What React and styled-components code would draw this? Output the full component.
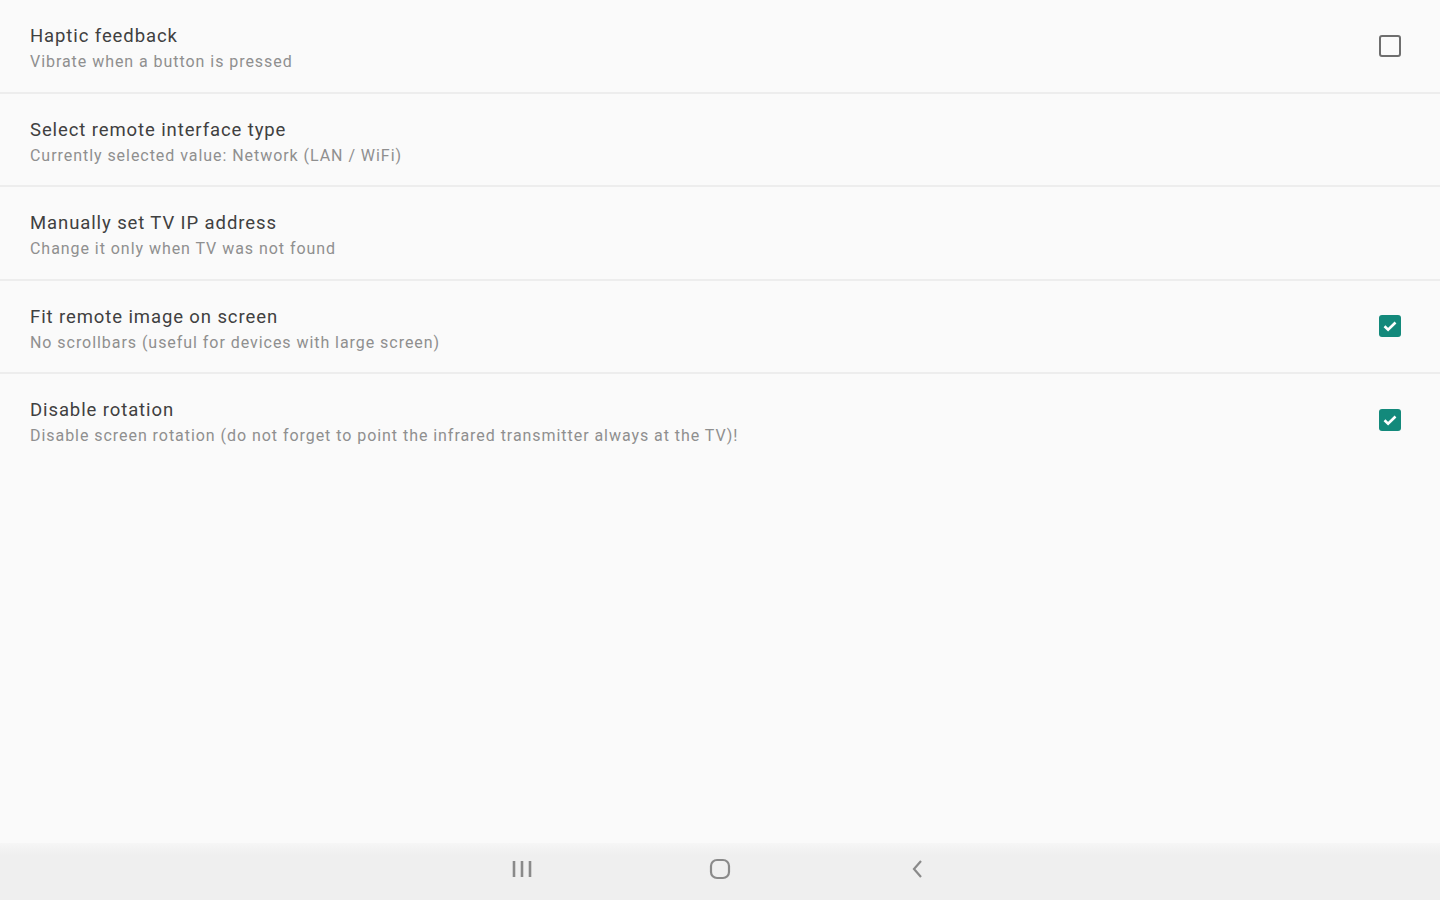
import React from "react";
import styled, { createGlobalStyle } from "styled-components";

const GlobalStyle = createGlobalStyle`
  html, body { margin: 0; padding: 0; background: #fafafa; }
  #root { height: 100vh; }
  * { box-sizing: border-box; }
`;

const Screen = styled.div`
  height: 900px;
  display: flex;
  flex-direction: column;
  background: #fafafa;
  font-family: Roboto, "Noto Sans", sans-serif;
`;

const List = styled.div`flex: 1;`;

const Row = styled.div`
  height: 93.5px;
  display: flex;
  align-items: center;
  padding: 0 39px 0 30px;
  border-bottom: 2px solid ${(p) => (p.last ? "transparent" : "#ededed")};
`;

const Texts = styled.div`
  flex: 1;
  display: flex;
  flex-direction: column;
  gap: 5px;
  padding-top: 6px;
`;

const Title = styled.div`
  font-size: 18.5px;
  letter-spacing: 0.9px;
  color: #404040;
  line-height: 21px;
`;

const Summary = styled.div`
  font-size: 16px;
  letter-spacing: 0.95px;
  color: #8f8f8f;
  line-height: 19px;
`;

const Box = styled.div`
  width: 22px;
  height: 22px;
  border-radius: 3px;
  display: flex;
  align-items: center;
  justify-content: center;
  border: ${(p) => (p.checked ? "none" : "2px solid #6e6e6e")};
  background: ${(p) => (p.checked ? "#13897b" : "transparent")};
`;

const NavBar = styled.div`
  height: 57px;
  background: linear-gradient(#f6f6f6, #efefef 12px);
  display: flex;
  align-items: center;
  justify-content: center;
  gap: 140px;
  padding-bottom: 5px;
`;

const NavButton = styled.div`
  width: 58px;
  display: flex;
  justify-content: center;
`;

const Check = ({ checked }) => (
  <Box checked={checked}>
    {checked && (
      <svg width="18" height="18" viewBox="0 0 18 18">
        <path d="M3.5 9.3l3.6 3.4L14.5 5.5" fill="none" stroke="#fff" strokeWidth="2.6" />
      </svg>
    )}
  </Box>
);

const items = [
  { title: "Haptic feedback", summary: "Vibrate when a button is pressed", check: false },
  { title: "Select remote interface type", summary: "Currently selected value: Network (LAN / WiFi)" },
  { title: "Manually set TV IP address", summary: "Change it only when TV was not found" },
  { title: "Fit remote image on screen", summary: "No scrollbars (useful for devices with large screen)", check: true },
  {
    title: "Disable rotation",
    summary: "Disable screen rotation (do not forget to point the infrared transmitter always at the TV)!",
    check: true,
  },
];

export default function App() {
  return (
    <Screen>
      <GlobalStyle />
      <List>
        {items.map((it, i) => (
          <Row key={it.title} last={i === items.length - 1}>
            <Texts>
              <Title>{it.title}</Title>
              <Summary>{it.summary}</Summary>
            </Texts>
            {it.check !== undefined && <Check checked={it.check} />}
          </Row>
        ))}
      </List>
      <NavBar>
        <NavButton>
          <svg width="24" height="22" viewBox="0 0 24 22">
            <path d="M4 3v16M12 3v16M20 3v16" stroke="#8a8a8a" strokeWidth="2.6" fill="none" />
          </svg>
        </NavButton>
        <NavButton>
          <svg width="24" height="24" viewBox="0 0 24 24">
            <rect x="3" y="3" width="18" height="18" rx="6" stroke="#8a8a8a" strokeWidth="2.2" fill="none" />
          </svg>
        </NavButton>
        <NavButton>
          <svg width="20" height="22" viewBox="0 0 20 22">
            <path d="M13 3l-7 8 7 8" stroke="#8a8a8a" strokeWidth="2.2" fill="none" />
          </svg>
        </NavButton>
      </NavBar>
    </Screen>
  );
}
